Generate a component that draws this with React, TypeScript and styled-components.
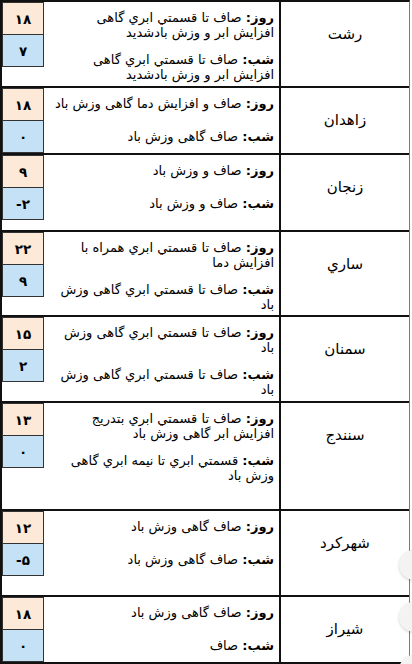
import React from "react";
import styled, { createGlobalStyle } from "styled-components";

const GlobalStyle = createGlobalStyle`
    html, body {
        margin: 0;
        padding: 0;
        background: #fff;
    }
    body {
        font-family: "DejaVu Sans", "Noto Sans", sans-serif;
        color: #000;
    }
`;

const Page = styled.div`
    position: relative;
    width: 412px;
    height: 664px;
    overflow: hidden;
    background: #fff;
`;

const Table = styled.div`
    width: 410px;
    box-sizing: border-box;
    direction: rtl;
    border-top: 2px solid #111;
    border-left: 2px solid #111;
    border-right: 1px solid #7a7a7a;
`;

const Row = styled.div<{ $h: number }>`
    display: grid;
    grid-template-columns: 130px 1fr 42px;
    min-height: ${(p) => p.$h}px;
    border-bottom: 2px solid #111;
`;

const City = styled.div`
    border-left: 2px solid #111;
    padding-top: 23px;
    text-align: center;
    font-size: 15px;
    line-height: 18px;
`;

const Desc = styled.div`
    display: flex;
    flex-direction: column;
    gap: 12px;
    padding: 8px 5px 0 0;
    font-size: 13px;
    line-height: 15px;
`;

const Para = styled.div`
    min-height: 21px;
`;

const Line = styled.div`
    white-space: nowrap;
`;

const Label = styled.b`
    font-weight: bold;
`;

const TempStack = styled.div`
    display: flex;
    flex-direction: column;
    align-self: start;
    border: 1px solid #333;
    direction: ltr;
`;

const Temp = styled.div<{ $night?: boolean }>`
    height: 31px;
    display: flex;
    align-items: center;
    justify-content: center;
    background: ${(p) => (p.$night ? "#c5e1f6" : "#fde9d7")};
    border-top: ${(p) => (p.$night ? "1px solid #333" : "none")};
    font-weight: bold;
    font-size: 13.5px;
`;

const Bubble = styled.div<{ $top: number }>`
    position: absolute;
    left: 399px;
    top: ${(p) => p.$top}px;
    width: 30px;
    height: 30px;
    border-radius: 50%;
    background: #f3f3f3;
    box-shadow: 0 1px 3px rgba(0, 0, 0, 0.18);
`;

type Forecast = {
    city: string;
    day: string[];
    night: string[];
    max: string;
    min: string;
    h: number;
};

const rows: Forecast[] = [
    {
        city: "رشت",
        day: ["صاف تا قسمتي ابري گاهی", "افزایش ابر و وزش بادشدید"],
        night: ["صاف تا قسمتي ابري گاهی", "افزایش ابر و وزش بادشدید"],
        max: "۱۸",
        min: "۷",
        h: 84,
    },
    {
        city: "زاهدان",
        day: ["صاف و افزایش دما گاهی وزش باد"],
        night: ["صاف گاهی وزش باد"],
        max: "۱۸",
        min: "۰",
        h: 65,
    },
    {
        city: "زنجان",
        day: ["صاف و وزش باد"],
        night: ["صاف و وزش باد"],
        max: "۹",
        min: "-۲",
        h: 75,
    },
    {
        city: "ساري",
        day: ["صاف تا قسمتي ابري همراه با", "افزایش دما"],
        night: ["صاف تا قسمتي ابري گاهی وزش", "باد"],
        max: "۲۲",
        min: "۹",
        h: 83,
    },
    {
        city: "سمنان",
        day: ["صاف تا قسمتي ابري گاهی وزش", "باد"],
        night: ["صاف تا قسمتي ابري گاهی وزش", "باد"],
        max: "۱۵",
        min: "۲",
        h: 84,
    },
    {
        city: "سنندج",
        day: ["صاف تا قسمتي ابري بتدريج", "افزایش ابر گاهی وزش باد"],
        night: ["قسمتي ابري تا نیمه ابري گاهی", "وزش باد"],
        max: "۱۳",
        min: "۰",
        h: 106,
    },
    {
        city: "شهرکرد",
        day: ["صاف گاهی وزش باد"],
        night: ["صاف گاهی وزش باد"],
        max: "۱۲",
        min: "-۵",
        h: 84,
    },
    {
        city: "شیراز",
        day: ["صاف گاهی وزش باد"],
        night: ["صاف"],
        max: "۱۸",
        min: "۰",
        h: 65,
    },
];

function Paragraph({ label, lines }: { label: string; lines: string[] }) {
    return (
        <Para>
            {lines.map((text, i) => (
                <Line key={i}>
                    {i === 0 && <Label>{label}</Label>}
                    {i === 0 ? " " + text : text}
                </Line>
            ))}
        </Para>
    );
}

export default function App() {
    return (
        <Page>
            <GlobalStyle />
            <Table>
                {rows.map((r) => (
                    <Row key={r.city} $h={r.h}>
                        <City>{r.city}</City>
                        <Desc>
                            <Paragraph label="روز:" lines={r.day} />
                            <Paragraph label="شب:" lines={r.night} />
                        </Desc>
                        <TempStack>
                            <Temp>{r.max}</Temp>
                            <Temp $night>{r.min}</Temp>
                        </TempStack>
                    </Row>
                ))}
            </Table>
            <Bubble $top={550} />
            <Bubble $top={602} />
            <Bubble $top={655} />
        </Page>
    );
}
